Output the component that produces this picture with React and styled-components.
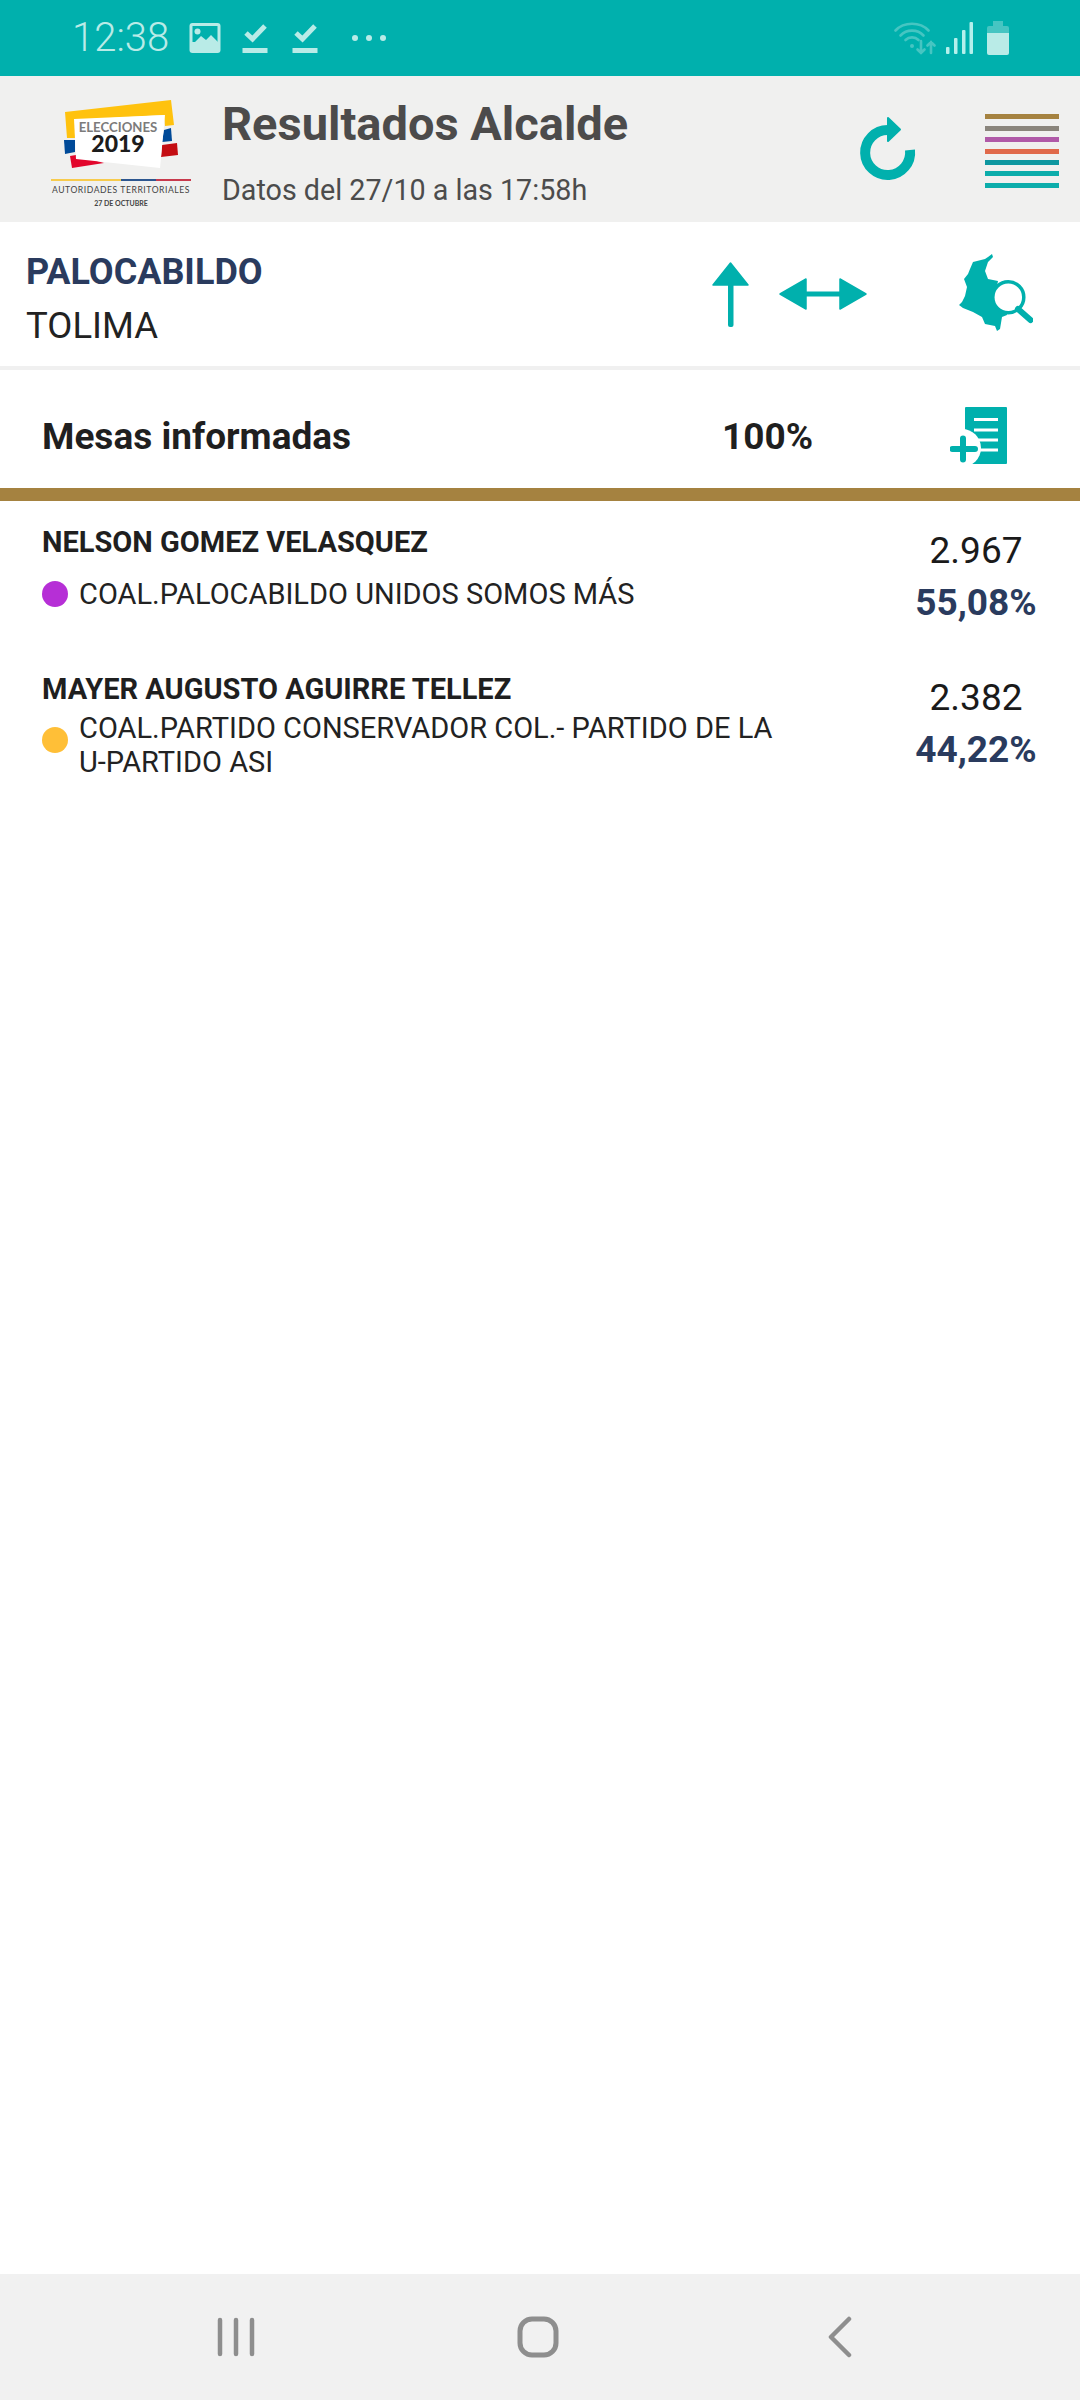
import React from "react";
import styled, { createGlobalStyle } from "styled-components";

const Global = createGlobalStyle`
  html, body { margin: 0; padding: 0; background: #fff; }
  * { box-sizing: border-box; }
`;

const TEAL = "#00B0AD";
const NAVY = "#2A3B5E";

const Page = styled.div`
  width: 1080px;
  height: 2400px;
  display: flex;
  flex-direction: column;
  font-family: Roboto, "Liberation Sans", sans-serif;
  background: #fff;
  overflow: hidden;
`;
const StatusBar = styled.div`
  height: 76px;
  background: ${TEAL};
  display: flex;
  align-items: center;
  justify-content: space-between;
  padding: 0 71px 0 72px;
  color: #B9EBE7;
`;
const StatusGroup = styled.div`
  display: flex;
  align-items: center;
`;
const Clock = styled.span`
  font-size: 40px;
  font-weight: 300;
  line-height: 76px;
  margin-right: 20px;
`;
const StatusIcon = styled.svg`
  display: block;
  flex: none;
  margin-left: ${p => p.$ml || 0}px;
`;
const Header = styled.header`
  height: 146px;
  background: #F0F0EF;
  display: flex;
  align-items: center;
  padding-left: 40px;
`;
const Logo = styled.svg`
  display: block;
  flex: none;
  width: 170px;
  height: 125px;
  margin-top: 2px;
`;
const HeaderText = styled.div`
  margin: 8px 0 0 12px;
  width: 637px;
  display: flex;
  flex-direction: column;
`;
const Title = styled.div`
  font-size: 47px;
  font-weight: 700;
  line-height: 52px;
  color: #4C4B4B;
`;
const Subtitle = styled.div`
  font-size: 28.7px;
  line-height: 36px;
  margin-top: 22px;
  color: #4C4C4C;
`;
const RefreshIcon = styled.svg`
  display: block;
  flex: none;
  width: 60px;
  height: 66px;
  margin-left: -2px;
  margin-top: 2px;
`;
const Menu = styled.div`
  margin-left: 68px;
  width: 74px;
  display: flex;
  flex-direction: column;
  gap: 6.4px;
  margin-top: 4px;
`;
const MenuLine = styled.div`
  height: 5px;
  background: ${p => p.$c};
`;
const Place = styled.section`
  height: 144px;
  display: flex;
  align-items: center;
  padding-left: 26px;
`;
const PlaceText = styled.div`
  width: 686px;
  margin-top: 10px;
`;
const PlaceName = styled.div`
  font-size: 36px;
  font-weight: 700;
  line-height: 50px;
  color: ${NAVY};
`;
const PlaceRegion = styled.div`
  font-size: 36.5px;
  line-height: 50px;
  margin-top: 4px;
  color: #222;
`;
const ActionIcon = styled.svg`
  display: block;
  flex: none;
  margin-left: ${p => p.$ml || 0}px;
  margin-top: ${p => p.$mt || 0}px;
`;
const Divider = styled.div`
  height: 4px;
  background: #F0F0F0;
`;
const Summary = styled.section`
  height: 118px;
  display: flex;
  align-items: center;
  padding: 14px 0 0 42px;
  color: #1F1F1F;
  font-size: 37px;
  font-weight: 700;
`;
const SummaryLabel = styled.div`
  width: 680px;
`;
const SummaryValue = styled.div`
  width: 228px;
`;
const GoldBar = styled.div`
  height: 13px;
  background: #A58240;
`;
const List = styled.main`
  flex: 1;
  display: flex;
  flex-direction: column;
`;
const Candidate = styled.article`
  height: 147px;
  padding: 24px 0 0 42px;
  display: flex;
`;
const CandidateMain = styled.div`
  width: 850px;
  display: flex;
  flex-direction: column;
`;
const Name = styled.div`
  font-size: 29px;
  font-weight: 700;
  line-height: 34px;
  color: #1F1F1F;
`;
const Party = styled.div`
  min-height: 68px;
  margin-top: 1px;
  display: flex;
  align-items: center;
  gap: 11px;
`;
const Dot = styled.span`
  flex: none;
  width: 26px;
  height: 26px;
  border-radius: 50%;
  margin-bottom: ${p => p.$mb || 0}px;
  background: ${p => p.$c};
`;
const PartyName = styled.div`
  font-size: 29px;
  line-height: 34px;
  color: #222;
  padding-top: ${p => p.$pt || 0}px;
`;
const Numbers = styled.div`
  width: 168px;
  text-align: center;
  margin-top: 1px;
`;
const Votes = styled.div`
  font-size: 37px;
  line-height: 50px;
  color: #1A1A1A;
`;
const Percent = styled.div`
  font-size: 37px;
  font-weight: 700;
  line-height: 50px;
  margin-top: 2px;
  color: ${NAVY};
`;
const NavBar = styled.nav`
  height: 126px;
  background: #F1F1F1;
  display: grid;
  grid-template-columns: repeat(3, 302px);
  justify-content: center;
  align-items: center;
  padding-right: 4px;
  justify-items: center;
`;
const NavIcon = styled.svg`
  display: block;
`;

const MENU = ["#A58240", "#8A857C", "#B05AA8", "#E0694A", "#0E97A0", "#0CADAB", "#0CADAB"];

const LogoArt = () => (
  <Logo viewBox="0 0 170 125">
    <polygon points="25,24 131,12 134,37 125,38 124,27 35,32 36,50 27,50" fill="#FFC20E" />
    <polygon points="24,52 35,52 35,64 25,66" fill="#004A98" />
    <polygon points="124,42 131,40 132,53 122,54" fill="#004A98" />
    <polygon points="122,57 137,55 138,67 121,69" fill="#C40D12" />
    <polygon points="30,68 36,67 64,75 32,80" fill="#E2062C" />
    <polygon points="34,31 125,27 120,80 36,71" fill="#FFFFFF" />
    <text x="78" y="44" textAnchor="middle" fontFamily="Lato, sans-serif" fontWeight="700" fontSize="13.2" fill="#7C7B7B">ELECCIONES</text>
    <text x="78" y="64" textAnchor="middle" fontFamily="Lato, sans-serif" fontWeight="900" fontSize="23" fill="#1C1C1C">2019</text>
    <rect x="11" y="91" width="70" height="2" fill="#F7CB4D" />
    <rect x="81" y="91" width="35" height="2" fill="#2D568F" />
    <rect x="116" y="91" width="35" height="2" fill="#C83A4D" />
    <text x="81" y="105" textAnchor="middle" fontFamily="Lato, sans-serif" fontWeight="400" fontSize="8.6" letterSpacing="0.55" fill="#444">AUTORIDADES TERRITORIALES</text>
    <text x="81" y="118" textAnchor="middle" fontFamily="Lato, sans-serif" fontWeight="700" fontSize="7" fill="#444">27 DE OCTUBRE</text>
  </Logo>
);

export default function App() {
  return (
    <Page>
      <Global />
      <StatusBar>
        <StatusGroup>
          <Clock>12:38</Clock>
          <StatusIcon width="32" height="32" viewBox="0 0 32 32" fill="none">
            <rect x="0.5" y="1" width="31" height="30" rx="3" fill="#B9EBE7" />
            <rect x="3.5" y="4" width="25" height="16" fill={TEAL} />
            <circle cx="8.5" cy="9.5" r="3" fill="#B9EBE7" />
            <path d="M3 23 L12 14 L17 18 L22 13 L29 20 L29 24 L3 24Z" fill="#B9EBE7" />
          </StatusIcon>
          <StatusIcon $ml={21} width="26" height="32" viewBox="0 0 26 32" fill="none">
            <path d="M4 11 L10.5 17 L23 4" stroke="#B9EBE7" strokeWidth="5" />
            <rect x="0.5" y="26" width="25" height="5" fill="#B9EBE7" />
          </StatusIcon>
          <StatusIcon $ml={24} width="26" height="32" viewBox="0 0 26 32" fill="none">
            <path d="M4 11 L10.5 17 L23 4" stroke="#B9EBE7" strokeWidth="5" />
            <rect x="0.5" y="26" width="25" height="5" fill="#B9EBE7" />
          </StatusIcon>
          <StatusIcon $ml={33} width="36" height="8" viewBox="0 0 36 8">
            <circle cx="4" cy="4" r="3" fill="#B9EBE7" />
            <circle cx="18" cy="4" r="3" fill="#B9EBE7" />
            <circle cx="32" cy="4" r="3" fill="#B9EBE7" />
          </StatusIcon>
        </StatusGroup>
        <StatusGroup>
          <StatusIcon width="42" height="34" viewBox="0 0 42 34" fill="none" stroke="#46C5C2" strokeWidth="2.6" strokeLinecap="round">
            <path d="M1.5 9.5 C10 0.5 26 0.5 34.5 9.5" />
            <path d="M6.5 14.5 C12.5 8 23.5 8 29.5 14.5" />
            <path d="M11.5 19 C15 15.5 21 15.5 24.5 19" />
            <circle cx="18" cy="25" r="2" fill="#46C5C2" stroke="none" />
            <path d="M27 20 V32 M23.5 28.5 L27 32 L30.5 28.5" />
            <path d="M37 32 V21 M33.5 24.5 L37 21 L40.5 24.5" />
          </StatusIcon>
          <StatusIcon $ml={10} width="27" height="32" viewBox="0 0 27 32" fill="#B4F0EC">
            <rect x="0" y="25" width="3.5" height="7" rx="1" />
            <rect x="8" y="16" width="3.5" height="16" rx="1" />
            <rect x="16" y="8" width="3.5" height="24" rx="1" />
            <rect x="23.5" y="0" width="3.5" height="32" rx="1" />
          </StatusIcon>
          <StatusIcon $ml={14} width="22" height="34" viewBox="0 0 22 34">
            <path d="M6 0 H16 V5 H20 Q22 5 22 7 V12 H0 V7 Q0 5 2 5 H6Z" fill="#46C5C2" />
            <path d="M0 12 H22 V32 Q22 34 20 34 H2 Q0 34 0 32Z" fill="#B9EBE7" />
          </StatusIcon>
        </StatusGroup>
      </StatusBar>

      <Header>
        <LogoArt />
        <HeaderText>
          <Title>Resultados Alcalde</Title>
          <Subtitle>Datos del 27/10 a las 17:58h</Subtitle>
        </HeaderText>
        <RefreshIcon viewBox="0 0 60 66" fill="none">
          <path d="M53 33 A 22.5 22.5 0 1 1 31 13" stroke={TEAL} strokeWidth="10" strokeLinecap="butt" />
          <path d="M31 1 L43 12.5 L31 24Z" fill={TEAL} stroke={TEAL} strokeWidth="2" strokeLinejoin="round" />
        </RefreshIcon>
        <Menu>
          {MENU.map((c, i) => <MenuLine key={i} $c={c} />)}
        </Menu>
      </Header>

      <Place>
        <PlaceText>
          <PlaceName>PALOCABILDO</PlaceName>
          <PlaceRegion>TOLIMA</PlaceRegion>
        </PlaceText>
        <ActionIcon width="37" height="65" viewBox="0 0 37 65">
          <path d="M18.5 1 L36 23 H1Z" fill={TEAL} stroke={TEAL} strokeWidth="1.5" strokeLinejoin="round" />
          <rect x="16" y="20" width="5.5" height="45" rx="2" fill={TEAL} />
        </ActionIcon>
        <ActionIcon $ml={30} width="88" height="32" viewBox="0 0 88 32">
          <path d="M1 16 L27 1 V31Z" fill={TEAL} stroke={TEAL} strokeWidth="1.5" strokeLinejoin="round" />
          <path d="M87 16 L61 1 V31Z" fill={TEAL} stroke={TEAL} strokeWidth="1.5" strokeLinejoin="round" />
          <rect x="25" y="13.5" width="38" height="5" fill={TEAL} />
        </ActionIcon>
        <ActionIcon $ml={92} $mt={-2} width="74" height="78" viewBox="0 0 74 78">
          <path d="M33 0 L29 3 L26 5 L18 7 L14 8 L11 15 L9 20 L5 25 L8 33 L6 42 L3 48 L0 51 L4 54 L14 58 L23 63 L26 70 L36 72 L38 77 L41 75 L43 63 L48 61 L45 40 L38 32 L39 27 L29 25 L26 17 L29 8 L34 3Z" fill={TEAL} />
          <circle cx="49.3" cy="43.3" r="15.5" fill="#fff" stroke={TEAL} strokeWidth="3.5" />
          <path d="M59 55 L71.5 66" stroke={TEAL} strokeWidth="6" strokeLinecap="round" />
        </ActionIcon>
      </Place>
      <Divider />

      <Summary>
        <SummaryLabel>Mesas informadas</SummaryLabel>
        <SummaryValue>100%</SummaryValue>
        <ActionIcon width="57" height="57" viewBox="0 0 57 57" $mt={-2}>
          <rect x="15" y="0" width="42" height="57" rx="1" fill={TEAL} />
          <path d="M24 12.5 H48 M24 23 H48 M24 33 H48 M24 43 H48" stroke="#fff" strokeWidth="3" />
          <circle cx="12" cy="41" r="19" fill="#fff" />
          <path d="M2.5 42 H25 M13 31.5 V52.5" stroke={TEAL} strokeWidth="6" strokeLinecap="round" />
        </ActionIcon>
      </Summary>
      <GoldBar />

      <List>
        <Candidate>
          <CandidateMain>
            <Name>NELSON GOMEZ VELASQUEZ</Name>
            <Party>
              <Dot $c="#B62FD6" />
              <PartyName>COAL.PALOCABILDO UNIDOS SOMOS MÁS</PartyName>
            </Party>
          </CandidateMain>
          <Numbers>
            <Votes>2.967</Votes>
            <Percent>55,08%</Percent>
          </Numbers>
        </Candidate>
        <Candidate>
          <CandidateMain>
            <Name>MAYER AUGUSTO AGUIRRE TELLEZ</Name>
            <Party>
              <Dot $c="#FFBF37" $mb={6} />
              <PartyName $pt={4}>COAL.PARTIDO CONSERVADOR COL.- PARTIDO DE LA<br />U-PARTIDO ASI</PartyName>
            </Party>
          </CandidateMain>
          <Numbers>
            <Votes>2.382</Votes>
            <Percent>44,22%</Percent>
          </Numbers>
        </Candidate>
      </List>

      <NavBar>
        <NavIcon width="40" height="40" viewBox="0 0 40 40" fill="none" stroke="#8E8E8E" strokeWidth="4.5" strokeLinecap="round">
          <path d="M4 3 V37 M20 3 V37 M36 3 V37" />
        </NavIcon>
        <NavIcon width="44" height="44" viewBox="0 0 44 44" fill="none" stroke="#8E8E8E" strokeWidth="5">
          <rect x="4" y="4" width="36" height="36" rx="12" />
        </NavIcon>
        <NavIcon width="26" height="42" viewBox="0 0 26 42" fill="none" stroke="#8E8E8E" strokeWidth="4.5" strokeLinecap="round" strokeLinejoin="round">
          <path d="M22 3 L4 21 L22 39" />
        </NavIcon>
      </NavBar>
    </Page>
  );
}
